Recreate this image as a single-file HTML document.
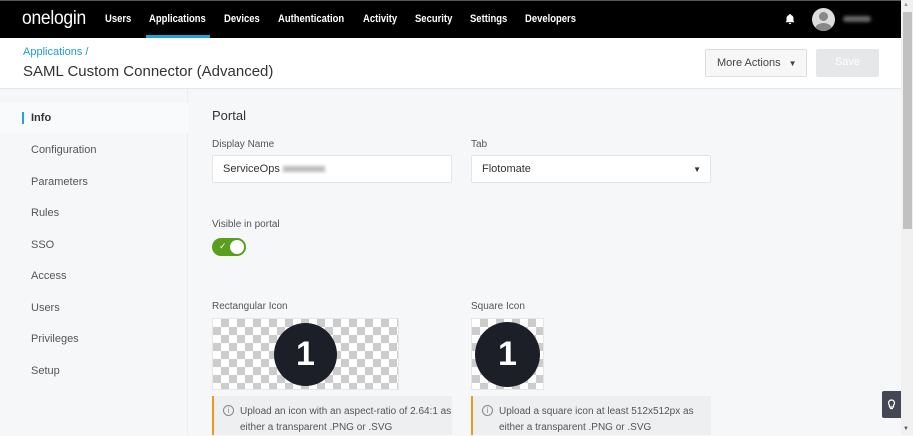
<!DOCTYPE html>
<html><head><style>
*{box-sizing:border-box;margin:0;padding:0}
body{width:913px;height:435px;overflow:hidden;font-family:"Liberation Sans",sans-serif;background:#f6f7f9;position:relative;color:#333}
.nav{position:absolute;left:0;top:0;width:901px;height:38px;background:#000;border-top:1px solid #555}
.nav .logo{position:absolute;left:22px;top:7px;color:#fff;font-size:19px;letter-spacing:-0.3px;transform:scaleX(0.92);transform-origin:left}
.nav a{position:absolute;top:12px;color:#fff;font-size:11px;font-weight:bold;transform:scaleX(0.86);transform-origin:left;white-space:nowrap}
.uline{position:absolute;left:146px;top:34px;width:64px;height:3px;background:#1ea6d8}
.hdr{position:absolute;left:0;top:38px;width:901px;height:51px;background:#fff;border-bottom:1px solid #e6e6e6}
.side{position:absolute;left:0;top:89px;width:188px;height:346px;background:#f6f7f9;border-right:1px solid #eceef0}
.side div{position:absolute;left:31px;font-size:11px;color:#555}
.lbl{position:absolute;font-size:10px;color:#555}
.input{position:absolute;background:#fff;border:1px solid #e2e4e6;border-radius:2px;height:28px;font-size:11px;padding:7px 10px;color:#333}
.check{position:absolute;background-color:#fff;background-image:linear-gradient(45deg,#ccc 25%,transparent 25%,transparent 75%,#ccc 75%),linear-gradient(45deg,#ccc 25%,transparent 25%,transparent 75%,#ccc 75%);background-size:16px 16px;background-position:0 0,8px 8px;border:1px solid #e6e6e6}
.circ{position:absolute;background:#1c1e28;border-radius:50%;color:#fff;font-weight:bold;text-align:center;font-size:34px}
.note{position:absolute;top:396px;height:39px;background:#eeeff1;border-left:2px solid #f7941d;font-size:10px;color:#555;padding:8px 0 0 26px;line-height:16px}
.note i{position:absolute;left:9px;top:9px;width:11px;height:11px;border:1px solid #888;border-radius:50%;font-style:normal;font-size:8px;text-align:center;line-height:9px;color:#888}
</style></head><body>
<div class="nav">
<div class="logo">onelogin</div>
<a style="left:105px">Users</a><a style="left:149px">Applications</a><a style="left:224px">Devices</a><a style="left:278px">Authentication</a><a style="left:363px">Activity</a><a style="left:415px">Security</a><a style="left:470px">Settings</a><a style="left:525px">Developers</a>
<div class="uline"></div>
<svg style="position:absolute;left:784px;top:12px" width="12" height="12" viewBox="0 0 12 12"><path d="M6 1a1 1 0 0 1 1 1 3.5 3.5 0 0 1 2.5 3.4V8l1 1.2H1.5L2.5 8V5.4A3.5 3.5 0 0 1 5 2a1 1 0 0 1 1-1zM4.8 10h2.4a1.2 1.2 0 0 1-2.4 0z" fill="#fff"/></svg>
<div style="position:absolute;left:812px;top:7px;width:23px;height:23px;border-radius:50%;background:#ddd;overflow:hidden"><div style="position:absolute;left:7px;top:4px;width:9px;height:9px;border-radius:50%;background:#888"></div><div style="position:absolute;left:3px;top:15px;width:17px;height:12px;border-radius:50%;background:#888"></div></div>
<div style="position:absolute;left:843px;top:15px;width:28px;height:6px;background:#666;border-radius:3px;filter:blur(1.5px)"></div>
</div>
<div class="hdr">
<div style="position:absolute;left:23px;top:8px;font-size:11px;color:#1e9ad0">Applications /</div>
<div style="position:absolute;left:23px;top:25px;font-size:15px;color:#333">SAML Custom Connector (Advanced)</div>
<div style="position:absolute;left:705px;top:11px;width:102px;height:28px;background:#f7f7f7;border:1px solid #ddd;border-radius:2px;font-size:11px;color:#444;padding:7px 0 0 11px">More Actions <span style="font-size:8px;margin-left:5px">▼</span></div>
<div style="position:absolute;left:816px;top:11px;width:63px;height:28px;background:#e6e7e8;border-radius:2px;font-size:11px;color:#fff;text-align:center;padding-top:7px">Save</div>
</div>
<div class="side">
<div style="left:0;top:14px;width:188px;height:30px;background:#f9fafb"></div>
<div style="left:22px;top:23px;width:2px;height:12px;background:#1ea6d8"></div>
<div style="top:23px;font-weight:bold;color:#333">Info</div>
<div style="top:55px">Configuration</div>
<div style="top:87px">Parameters</div>
<div style="top:118px">Rules</div>
<div style="top:150px">SSO</div>
<div style="top:181px">Access</div>
<div style="top:213px">Users</div>
<div style="top:244px">Privileges</div>
<div style="top:276px">Setup</div>
</div>
<div style="position:absolute;left:212px;top:108px;font-size:13px;color:#333">Portal</div>
<div class="lbl" style="left:212px;top:139px">Display Name</div>
<div class="input" style="left:212px;top:155px;width:240px">ServiceOps <span style="display:inline-block;width:42px;height:6px;background:#bbb;filter:blur(1.5px);vertical-align:middle"></span></div>
<div class="lbl" style="left:471px;top:139px">Tab</div>
<div class="input" style="left:471px;top:155px;width:240px">Flotomate<span style="position:absolute;right:9px;top:9px;font-size:8px;color:#333">▼</span></div>
<div class="lbl" style="left:212px;top:219px">Visible in portal</div>
<div style="position:absolute;left:212px;top:238px;width:34px;height:18px;border-radius:9px;background:#5a9e1e"><span style="position:absolute;left:7px;top:3px;color:#fff;font-size:9px">✓</span><div style="position:absolute;right:2px;top:2px;width:14px;height:14px;border-radius:50%;background:#fff"></div></div>
<div class="lbl" style="left:212px;top:301px">Rectangular Icon</div>
<div class="lbl" style="left:471px;top:301px">Square Icon</div>
<div class="check" style="left:212px;top:318px;width:187px;height:72px"></div>
<div class="circ" style="left:274px;top:323px;width:63px;height:63px;line-height:63px">1</div>
<div class="check" style="left:471px;top:318px;width:73px;height:72px"></div>
<div class="circ" style="left:475px;top:322px;width:65px;height:65px;line-height:65px">1</div>
<div class="note" style="left:212px;width:240px"><i>i</i>Upload an icon with an aspect-ratio of 2.64:1 as<br>either a transparent .PNG or .SVG</div>
<div class="note" style="left:471px;width:240px"><i>i</i>Upload a square icon at least 512x512px as<br>either a transparent .PNG or .SVG</div>
<div style="position:absolute;left:882px;top:391px;width:19px;height:27px;background:#454854;border-radius:2px 0 0 2px"><svg style="position:absolute;left:5px;top:8px" width="9" height="11" viewBox="0 0 9 11"><path d="M4.5 1a3 3 0 0 0-2 5.2V8h4V6.2A3 3 0 0 0 4.5 1zM3 9.5h3" stroke="#fff" fill="none" stroke-width="1.2"/></svg></div>
<div style="position:absolute;left:901px;top:0;width:12px;height:435px;background:#f1f1f1"></div>
<div style="position:absolute;left:903px;top:12px;width:9px;height:217px;background:#c1c1c1"></div>
<div style="position:absolute;left:903px;top:2px;font-size:6px;color:#999">▲</div>
<div style="position:absolute;left:903px;top:426px;font-size:6px;color:#555">▼</div>
</body></html>
